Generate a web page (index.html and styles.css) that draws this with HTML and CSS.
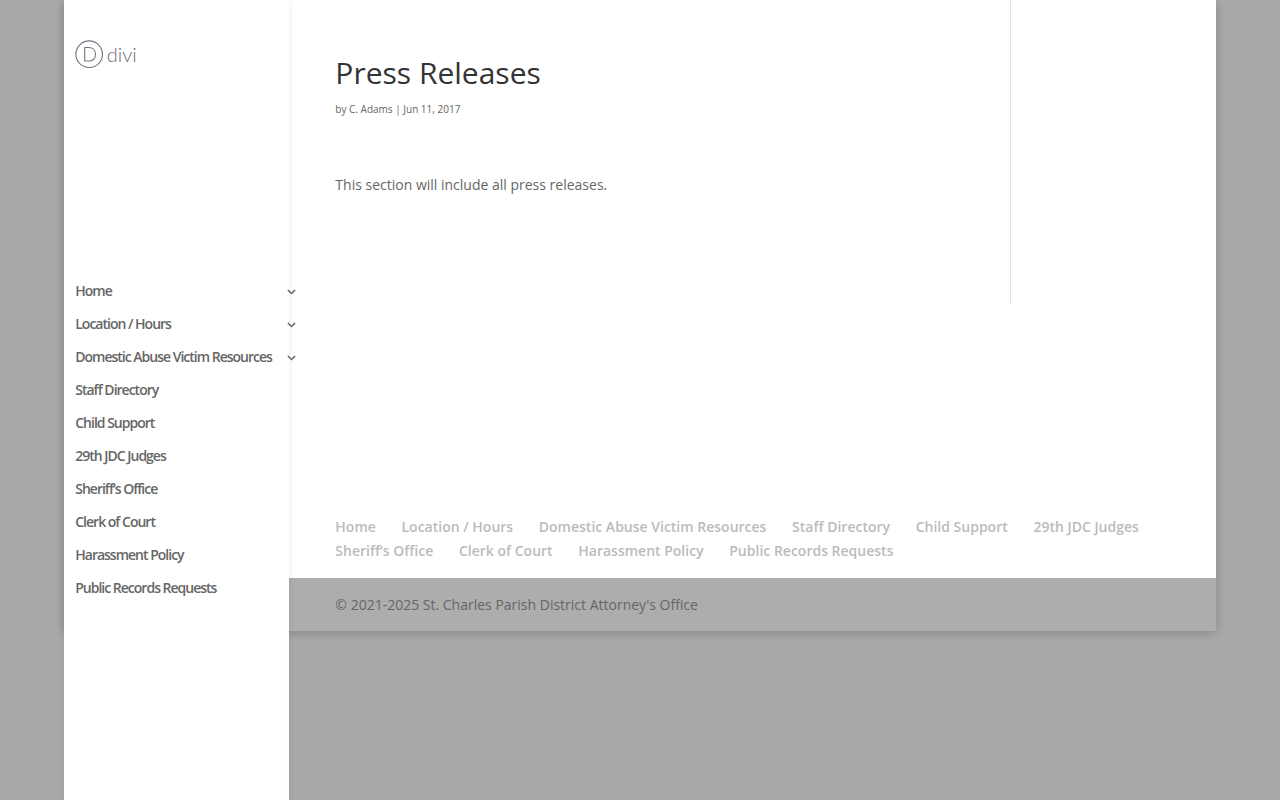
FILE: index.html
```html
<!DOCTYPE html>
<html lang="en">
<head>
    <meta charset="UTF-8">
    <meta name="viewport" content="width=device-width, initial-scale=1.0">
    <title>Press Releases</title>
    <link rel="stylesheet" href="styles.css">
</head>
<body>
    <div class="page-container">
        <header class="main-header">
            <a class="logo" href="#">
                <svg class="logo-mark" viewBox="0 0 28 28" width="28" height="28">
                    <circle cx="14.2" cy="14.2" r="13.3"/>
                    <path d="M9.700 7.500v13.500h4.100c4.300 0 6.700-2.600 6.700-6.700s-2.400-6.800-6.700-6.800z"/>
                </svg>
                <span class="logo-text">divi</span>
            </a>
            <nav>
                <ul class="top-menu">
                    <li class="has-children"><a href="#">Home</a>
                        <svg class="arrow" viewBox="0 0 9 6" width="9" height="6"><path d="M.9 1 4.500 4.500 8.100 1"/></svg></li>
                    <li class="has-children"><a href="#">Location / Hours</a>
                        <svg class="arrow" viewBox="0 0 9 6" width="9" height="6"><path d="M.9 1 4.500 4.500 8.100 1"/></svg></li>
                    <li class="has-children"><a href="#">Domestic Abuse Victim Resources</a>
                        <svg class="arrow" viewBox="0 0 9 6" width="9" height="6"><path d="M.9 1 4.500 4.500 8.100 1"/></svg></li>
                    <li><a href="#">Staff Directory</a></li>
                    <li><a href="#">Child Support</a></li>
                    <li><a href="#">29th JDC Judges</a></li>
                    <li><a href="#">Sheriff’s Office</a></li>
                    <li><a href="#">Clerk of Court</a></li>
                    <li><a href="#">Harassment Policy</a></li>
                    <li><a href="#">Public Records Requests</a></li>
                </ul>
            </nav>
        </header>

        <div class="main-area">
            <main class="main-content">
                <article class="post">
                    <h1 class="entry-title">Press Releases</h1>
                    <p class="post-meta">by <a href="#">C. Adams</a> | Jun 11, 2017</p>
                    <div class="entry-content">
                        <p>This section will include all press releases.</p>
                    </div>
                </article>
            </main>

            <footer class="main-footer">
                <ul class="bottom-nav">
                    <li><a href="#">Home</a></li>
                    <li><a href="#">Location / Hours</a></li>
                    <li><a href="#">Domestic Abuse Victim Resources</a></li>
                    <li><a href="#">Staff Directory</a></li>
                    <li><a href="#">Child Support</a></li>
                    <li><a href="#">29th JDC Judges</a></li>
                    <li><a href="#">Sheriff’s Office</a></li>
                    <li><a href="#">Clerk of Court</a></li>
                    <li><a href="#">Harassment Policy</a></li>
                    <li><a href="#">Public Records Requests</a></li>
                </ul>
                <div class="footer-bottom">© 2021-2025 St. Charles Parish District Attorney's Office</div>
            </footer>
        </div>
    </div>
</body>
</html>
```
FILE: styles.css
```css
* {
    box-sizing: border-box;
}

body {
    margin: 0;
    height: 100vh;
    overflow: hidden;
    background-color: #a9a9a9;
    color: #666;
    font-family: "Open Sans", Arial, sans-serif;
    font-size: 14px;
    line-height: 24px;
}

a {
    color: inherit;
    text-decoration: none;
}

ul {
    margin: 0;
    padding: 0;
    list-style: none;
}

h1,
p {
    margin: 0;
}

.page-container {
    display: flex;
    width: 90%;
    height: 631px;
    margin: 0 auto;
    background-color: #fff;
    box-shadow: 0 2px 10px rgba(0, 0, 0, 0.2);
}

/* side header, taller than the boxed page */
.main-header {
    position: relative;
    z-index: 1;
    flex: none;
    width: 225px;
    height: 100vh;
    padding: 40px 0 0 11.25px;
    background-color: #fff;
    box-shadow: 0 0 7px rgba(0, 0, 0, 0.08);
}

.logo {
    display: flex;
    align-items: center;
    gap: 3.5px;
    height: 28px;
    margin-bottom: 206px;
    color: #666c76;
}

.logo-mark {
    fill: none;
    stroke: #70767f;
    stroke-width: 1.1;
}

.logo-text {
    font-family: Lato, sans-serif;
    font-weight: 300;
    font-size: 20px;
    line-height: 28px;
}

.top-menu li {
    display: flex;
    align-items: center;
    height: 33px;
    color: #666;
    font-weight: 600;
    letter-spacing: -1px;
    white-space: nowrap;
}

.has-children {
    justify-content: space-between;
    width: 220.75px;
}

.arrow {
    margin-top: 3px;
    fill: none;
    stroke: #666;
    stroke-width: 1.6;
}

.main-area {
    display: flex;
    flex: 1;
    flex-direction: column;
    justify-content: space-between;
}

.main-content {
    width: 722px;
    height: 305px;
    padding: 58px 46.35px 0;
    border-right: 1px solid #e2e2e2;
}

.entry-title {
    color: #333;
    font-size: 30px;
    font-weight: 400;
    line-height: 30px;
}

.post-meta {
    margin-top: 9px;
    font-size: 10px;
}

.entry-content {
    margin-top: 52px;
}

.bottom-nav {
    display: flex;
    flex-wrap: wrap;
    column-gap: 25.65px;
    padding: 0 46.35px 15px;
    color: #bbb;
    font-weight: 600;
}

.footer-bottom {
    height: 53px;
    padding: 15px 46.35px 0;
    background-color: #adadad;
}
```
